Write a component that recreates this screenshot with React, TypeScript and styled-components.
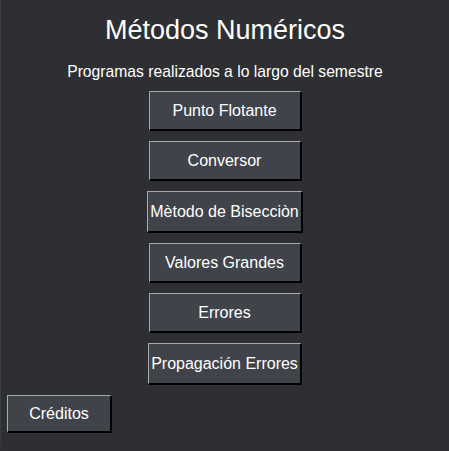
import styled, { createGlobalStyle } from "styled-components"

const GlobalStyle = createGlobalStyle`
  html, body {
    margin: 0;
    padding: 0;
    background: #2e2f33;
  }
`

const Window = styled.div`
  width: 449px;
  height: 451px;
  box-sizing: border-box;
  background: #2e2f33;
  border-left: 1px solid #3a3b3f;
  border-bottom-left-radius: 8px;
  font-family: "Liberation Sans", Arial, sans-serif;
  color: #ffffff;
  display: flex;
  flex-direction: column;
  padding-top: 15px;
`

const Title = styled.h1`
  margin: 0;
  font-size: 27px;
  font-weight: normal;
  line-height: 30px;
  text-align: center;
`

const Subtitle = styled.p`
  margin: 18px 0 0;
  font-size: 15.7px;
  line-height: 18px;
  text-align: center;
`

const Menu = styled.div`
  display: flex;
  flex-direction: column;
  align-items: center;
  gap: 10px;
  margin-top: 10px;
`

const Button = styled.button<{ $wide?: boolean }>`
  box-sizing: border-box;
  min-width: ${({ $wide }) => ($wide ? 154 : 153)}px;
  height: ${({ $wide }) => ($wide ? 42 : 40)}px;
  padding: 0 2px;
  background: #41434b;
  color: #ffffff;
  font-family: "Liberation Sans", Arial, sans-serif;
  font-size: 16px;
  border-style: solid;
  border-width: 1px 2px 2px 1px;
  border-color: #a9a9a9 #000000 #000000 #a9a9a9;
  border-radius: 0;
  cursor: pointer;
`

const Footer = styled.div`
  display: flex;
  padding: 10px 0 0 6px;
`

const CreditsButton = styled(Button)`
  min-width: 105px;
  height: 38px;
`

const programs = [
  { label: "Punto Flotante" },
  { label: "Conversor" },
  { label: "Mètodo de Bisecciòn", wide: true },
  { label: "Valores Grandes" },
  { label: "Errores" },
  { label: "Propagación Errores", wide: true },
]

export default function App() {
  return (
    <>
      <GlobalStyle />
      <Window>
        <Title>Métodos Numéricos</Title>
        <Subtitle>Programas realizados a lo largo del semestre</Subtitle>
        <Menu>
          {programs.map((p) => (
            <Button key={p.label} $wide={p.wide}>
              {p.label}
            </Button>
          ))}
        </Menu>
        <Footer>
          <CreditsButton>Créditos</CreditsButton>
        </Footer>
      </Window>
    </>
  )
}
